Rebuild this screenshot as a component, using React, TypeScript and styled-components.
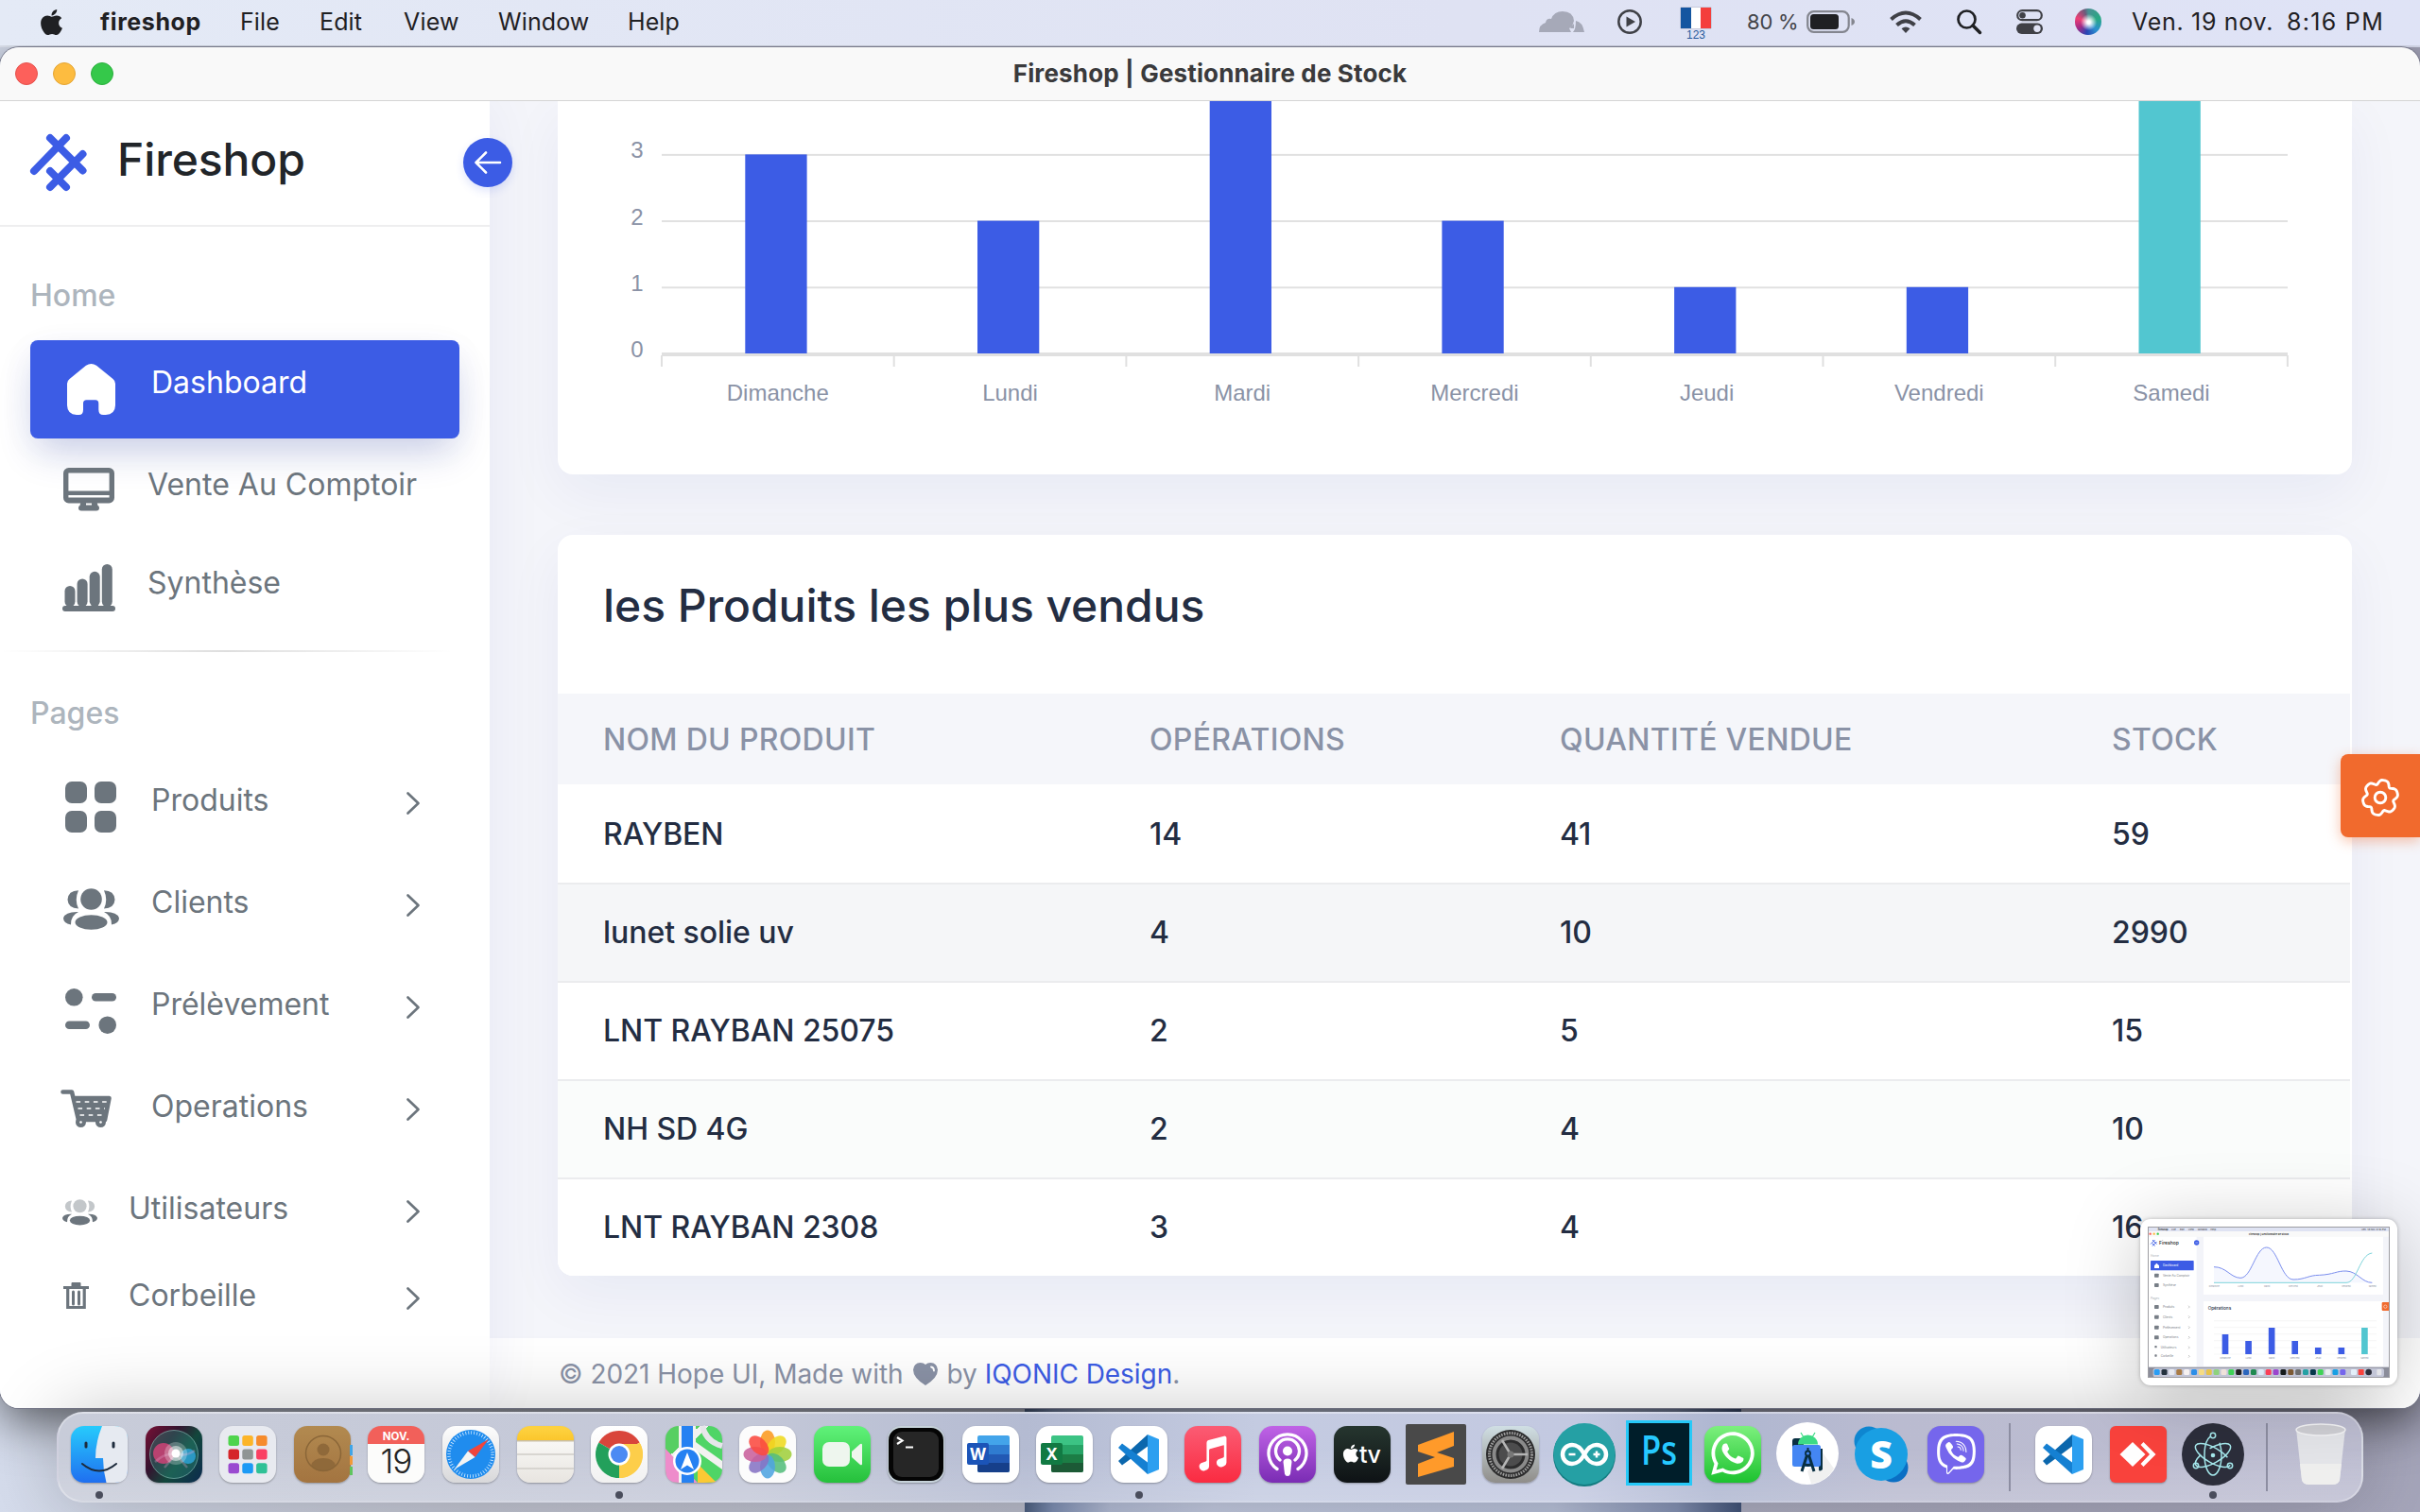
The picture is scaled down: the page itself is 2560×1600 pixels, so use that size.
import React from "react";
import styled, { createGlobalStyle } from "styled-components";
import { FaApple, FaViber, FaWhatsapp } from "react-icons/fa";
import { IoMusicalNotes } from "react-icons/io5";

const BLUE = "#3c5ce5";
const TEAL = "#52c6d0";
const GREY = "#6c757d";
const MUTED = "#8a92a6";

const GlobalStyle = createGlobalStyle`
  * { box-sizing: border-box; }
  body { margin: 0; font-family: Inter, "Liberation Sans", sans-serif; overflow: hidden; }
  svg { display: block; flex: none; overflow: visible; }
`;

/* ---------- Desktop ---------- */

const Desktop = styled.div`
  position: relative;
  width: 2560px;
  height: 1600px;
  overflow: hidden;
  display: flex;
  flex-direction: column;
  background:
    linear-gradient(90deg, #4c5f80 0, #7f90b4 30px, #b4bdd6 90px, #c3cae0 200px, #b9c2da 560px, #8592b4 690px, #43557a 756px) 1084px 1490px / 758px 110px no-repeat,
    linear-gradient(90deg, #e4eaf6 0%, #dfe2f3 60%, #dfe3f6 100%) 0 0 / 100% 50px no-repeat,
    linear-gradient(90deg, #d5dcec 0%, #c3c6d3 20%, #b9bccb 45%, #a9a9bd 80%, #a5a5ba 100%);
`;

const MenuBar = styled.header`
  position: relative;
  z-index: 1;
  height: 48px;
  flex: none;
  display: flex;
  align-items: center;
  padding: 0 38px 2px 39px;
  color: #1f2023;
  font-size: 25px;
  background: linear-gradient(90deg, #e4eaf6 0%, #dfe2f3 60%, #dfe3f6 100%);
`;

const MenuItem = styled.span<{ $w: number; $bold?: boolean; $ls?: number }>`
  width: ${(p) => p.$w}px;
  flex: none;
  white-space: pre;
  font-weight: ${(p) => (p.$bold ? 700 : 400)};
  letter-spacing: ${(p) => p.$ls ?? 0}px;
`;

const StatusArea = styled.div`
  margin-left: auto;
  display: flex;
  align-items: center;
`;

const StatusCell = styled.div<{ $w: number }>`
  width: ${(p) => p.$w}px;
  flex: none;
  display: flex;
  align-items: center;
`;

const Input = styled.div`
  display: flex;
  flex-direction: column;
  align-items: center;
  gap: 2px;
  width: 32px;
  font: 12px/11px "Liberation Sans", sans-serif;
  color: #285a9c;
  padding-top: 4px;
`;

const Flag = styled.div`
  width: 32px;
  height: 22px;
  background: linear-gradient(90deg, #1455a0 0 33%, #fff 33% 67%, #f43e3c 67%);
  box-shadow: 0 0 1px #556;
`;

const Percent = styled.span`
  font-size: 22px;
  color: #434449;
  letter-spacing: -0.2px;
`;

const SiriDot = styled.div`
  width: 28px;
  height: 28px;
  border-radius: 50%;
  background:
    radial-gradient(circle at 52% 52%, #fff 0 8%, rgba(255, 255, 255, 0) 42%),
    conic-gradient(#4a8f93, #27a982 20%, #2b8fd0 38%, #2846b4 52%, #a42a86 66%, #ee3f75 80%, #6b5b7b 95%, #4a8f93);
`;

/* ---------- Window ---------- */

const Window = styled.section`
  position: relative;
  isolation: isolate;
  margin-top: 2px;
  height: 1440px;
  flex: none;
  display: flex;
  flex-direction: column;
  border-radius: 20px;
  box-shadow: 0 0 0 1px #77798a, 0 14px 50px rgba(0, 0, 0, 0.6);
`;

const TitleBar = styled.div`
  height: 57px;
  flex: none;
  display: grid;
  grid-template-columns: 1fr auto 1fr;
  align-items: center;
  padding: 0 16px 1px;
  background: #f9f9f9;
  border-bottom: 1px solid #d4d4d4;
  border-radius: 20px 20px 0 0;
`;

const Lights = styled.div`
  display: flex;
  gap: 16px;
`;

const Light = styled.span<{ $c: string; $b: string }>`
  width: 24px;
  height: 24px;
  border-radius: 50%;
  background: ${(p) => p.$c};
  border: 1px solid ${(p) => p.$b};
`;

const Title = styled.h1`
  margin: 0;
  font-size: 26px;
  font-weight: 700;
  color: #3a3a3c;
  letter-spacing: 0.15px;
  padding-bottom: 1px;
`;

const Body = styled.div`
  flex: 1;
  min-height: 0;
  display: flex;
  border-radius: 0 0 20px 20px;
  overflow: hidden;
  background: #f4f5fa;
`;

/* ---------- Sidebar ---------- */

const Sidebar = styled.aside`
  position: relative;
  z-index: 2;
  width: 518px;
  flex: none;
  background: #fff;
  box-shadow: 0 0 60px rgba(17, 38, 146, 0.06);
`;

const Brand = styled.div`
  height: 133px;
  border-bottom: 2px solid #eeeeef;
  display: flex;
  align-items: center;
  padding: 0 0 2px 32px;
  gap: 32px;
`;

const BrandName = styled.h2`
  margin: 0;
  padding-bottom: 5px;
  font-size: 48px;
  line-height: 60px;
  font-weight: 500;
  color: #212529;
  letter-spacing: -0.1px;
`;

const Toggle = styled.button`
  position: absolute;
  left: 490px;
  top: 39px;
  width: 52px;
  height: 52px;
  border: 0;
  padding: 0;
  border-radius: 50%;
  background: ${BLUE};
  box-shadow: 0 4px 10px rgba(58, 87, 232, 0.16);
  display: grid;
  place-items: center;
`;

const GroupLabel = styled.div<{ $top: number; $bottom: number }>`
  padding: ${(p) => p.$top}px 0 ${(p) => p.$bottom}px 32px;
  font-size: 32px;
  line-height: 40px;
  font-weight: 500;
  color: #adb5bd;
`;

const NavRow = styled.a<{ $h: number; $active?: boolean }>`
  display: flex;
  align-items: center;
  height: ${(p) => p.$h}px;
  margin: 0 32px ${(p) => (p.$active ? 2 : 0)}px;
  border-radius: 8px;
  color: ${(p) => (p.$active ? "#fff" : GREY)};
  background: ${(p) => (p.$active ? BLUE : "transparent")};
  box-shadow: ${(p) => (p.$active ? "0 20px 40px -6px rgba(17, 38, 146, 0.2), 0 8px 40px rgba(17,38,146,.04)" : "none")};
`;

const IconSlot = styled.span<{ $w: number; $left: number; $lift: number }>`
  width: ${(p) => p.$w}px;
  padding-left: ${(p) => p.$left}px;
  padding-bottom: ${(p) => p.$lift * 2}px;
  flex: none;
`;

const NavLabel = styled.span<{ $lift: number }>`
  flex: 1;
  font-size: 32px;
  line-height: 40px;
  white-space: nowrap;
  padding-bottom: ${(p) => p.$lift * 2}px;
`;

const ChevronSlot = styled.span`
  padding: 0 42px 8px 0;
`;

const Separator = styled.hr`
  margin: 14px 38px 0 0;
  height: 2px;
  border: 0;
  background: linear-gradient(90deg, transparent, rgba(0, 0, 0, 0.13), transparent);
`;

/* ---------- Main ---------- */

const Main = styled.main`
  flex: 1;
  min-width: 0;
  display: flex;
  flex-direction: column;
`;

const Content = styled.div`
  flex: 1;
  padding: 0 72px;
  display: flex;
  flex-direction: column;
  gap: 64px;
`;

const Card = styled.section<{ $h: number; $cut?: boolean }>`
  height: ${(p) => p.$h}px;
  flex: none;
  background: #fff;
  border-radius: ${(p) => (p.$cut ? "0 0 16px 16px" : "16px")};
  box-shadow: 0 20px 60px rgba(17, 38, 146, 0.055);
  overflow: hidden;
`;

const CardTitle = styled.h3`
  margin: 0;
  height: 168px;
  display: flex;
  align-items: center;
  padding: 0 48px 19px;
  font-size: 48px;
  font-weight: 500;
  color: #232d42;
  letter-spacing: -0.06px;
`;

const Table = styled.table`
  width: 1896px;
  table-layout: fixed;
  border-collapse: separate;
  border-spacing: 0;
  font-size: 32px;
  font-weight: 500;
`;

const Th = styled.th<{ $w: number }>`
  width: ${(p) => p.$w}px;
  height: 96px;
  padding: 0 48px;
  text-align: left;
  font-weight: 500;
  letter-spacing: 0.3px;
  color: ${MUTED};
  background: #f5f6fa;
  white-space: nowrap;
`;

const Td = styled.td<{ $bg: string; $rule: boolean }>`
  height: 104px;
  padding: 0 48px ${(p) => (p.$rule ? 2 : 0)}px;
  color: #232d42;
  background: ${(p) => p.$bg};
  border-top: ${(p) => (p.$rule ? "2px solid #ebecee" : "0")};
  letter-spacing: -0.05px;
  white-space: nowrap;
`;

const Footer = styled.footer`
  height: 74px;
  flex: none;
  position: relative;
  background: #fff;
  padding: 2px 0 0 73px;
  display: flex;
  align-items: center;
  gap: 10px;
  font-size: 28px;
  letter-spacing: -0.04px;
  color: ${MUTED};
  white-space: nowrap;
`;

const FooterLink = styled.a`
  color: ${BLUE};
`;

const SettingsTab = styled.button`
  position: absolute;
  z-index: 3;
  right: 0;
  top: 748px;
  width: 84px;
  height: 88px;
  border: 0;
  padding: 4px 0 0;
  border-radius: 8px 0 0 8px;
  background: #f16a2d;
  box-shadow: 0 4px 14px rgba(241, 106, 45, 0.4);
  display: grid;
  place-items: center;
`;

const Preview = styled.div`
  position: absolute;
  z-index: 5;
  left: 2264px;
  top: 1290px;
  width: 272px;
  height: 176px;
  padding: 8px;
  background: #fff;
  border-radius: 11px;
  box-shadow: 0 0 4px rgba(0, 0, 0, 0.25), 0 10px 80px rgba(0, 0, 0, 0.22);
`;

/* ---------- Dock ---------- */

const Dock = styled.nav`
  margin: 4px 60px 0;
  height: 96px;
  flex: none;
  position: relative;
  display: flex;
  padding-left: 4px;
  border-radius: 28px;
  border: 2px solid rgba(255, 255, 255, 0.28);
  background:
    linear-gradient(180deg, rgba(255, 255, 255, 0) 40%, rgba(255, 255, 255, 0.16)),
    linear-gradient(90deg, #c8ccd9 0%, #c4c8d8 30%, #b4bbd2 42%, #c4cbe1 52%, #c3c9e1 66%, #afb7d1 72%, #babbd0 80%, #bdbdd1 100%);
  background-clip: border-box;
  box-shadow: 0 0 80px rgba(0, 0, 0, 0.23);
`;

const Slot = styled.div`
  width: 78.56px;
  flex: none;
  display: flex;
  flex-direction: column;
  align-items: center;
  padding-top: 13px;
`;

const Tile = styled.div<{ $bg: string; $r: number }>`
  width: 60px;
  height: 60px;
  border-radius: ${(p) => p.$r}px;
  background: ${(p) => p.$bg};
  box-shadow: ${(p) => (p.$bg === "none" ? "none" : "0 1px 2px rgba(0, 0, 0, 0.3)")};
`;

const Running = styled.span`
  width: 8px;
  height: 8px;
  margin-top: 9px;
  border-radius: 50%;
  background: #4a4d5c;
`;

const DockRule = styled.div`
  width: 36px;
  flex: none;
  display: flex;
  justify-content: center;
  padding-top: 10px;
  &::before { content: ""; width: 2px; height: 72px; background: #8d8ea2; }
`;

/* ---------- Sidebar icons ---------- */

const HomeIcon = () => (
  <svg width="51" height="54" viewBox="0 0 51 54" fill="currentColor">
    <path d="M17 48.500V42q0-3.700 3.500-3.700h9.500q3.300 0 3.300 3.700v6.500q0 5.500 5 5.500h2.500q10-.5 10.200-10V21q0-3-2.500-5L31 1.800q-5.500-3.600-11 0L2.600 16Q0 18 0 21v23q.3 9.500 10 10h2.500q4.500 0 4.500-5.500Z" />
  </svg>
);

const MonitorIcon = () => (
  <svg width="54" height="46" viewBox="0 0 54 46">
    <rect x="2.700" y="2.700" width="48.600" height="32" rx="3" fill="none" stroke="currentColor" strokeWidth="5.400" />
    <path d="M3 24.500h48v4.500H3zM3 31.500h48v4H3z" fill="currentColor" />
    <path d="M18.500 36h17l1 4q1.500 0 1.500 2.500 0 3-3 3H19q-3 0-3-3 0-2.500 1.500-2.500Z" fill="currentColor" />
    <path d="M24 37.500h6v2h-6z" fill="#fff" />
  </svg>
);

const BarsIcon = () => (
  <svg width="56" height="50" viewBox="0 0 56 50" fill="currentColor">
    <rect y="44" width="56" height="6" rx="3" />
    <rect x="2.500" y="23" width="11" height="22" rx="5.500" />
    <rect x="15.600" y="15.500" width="11" height="29.500" rx="5.500" />
    <rect x="28.700" y="7.800" width="11" height="37" rx="5.500" />
    <rect x="41.800" y="0" width="11" height="45" rx="5.500" />
  </svg>
);

const GridIcon = () => (
  <svg width="54" height="54" viewBox="0 0 54 54" fill="currentColor">
    {[0, 31].map((x) => [0, 31].map((y) => <rect key={`${x}-${y}`} x={x} y={y} width="23" height="23" rx="7" />))}
  </svg>
);

const PeopleIcon = ({ w, faded }: { w: number; faded?: boolean }) => (
  <svg width={w} height={(w * 44) / 59} viewBox="0 0 59 44" fill="currentColor">
    <g opacity={faded ? 0.4 : 1}>
      <circle cx="29.500" cy="11.500" r="11.300" />
      <path d="M16 2.200Q5 2.500 4.500 12 5 21 16 21.500q-4.500-9.500 0-19.300ZM43 2.200q11 .3 11.500 9.800Q54 21 43 21.500q4.500-9.500 0-19.300Z" />
    </g>
    <ellipse cx="29.500" cy="36" rx="17" ry="7.800" />
    <path d="M16 25q-14-.5-16 6.500 0 5.500 8 7-.5-9.500 8-13.500ZM43 25q14-.5 16 6.500 0 5.500-8 7 .5-9.500-8-13.500Z" />
  </svg>
);

const FilterIcon = () => (
  <svg width="54" height="48" viewBox="0 0 54 48" fill="currentColor">
    <circle cx="9.300" cy="9.300" r="9.300" />
    <rect x="28" y="5" width="26" height="8.500" rx="4.250" />
    <rect x="0" y="34.500" width="26" height="8.500" rx="4.250" />
    <circle cx="44.700" cy="38.700" r="9.300" />
  </svg>
);

const CartIcon = () => (
  <svg width="53" height="40" viewBox="0 0 53 40">
    <path d="M2.500 2.500h9.500l7 29.500h28l4.500-23H14" fill="none" stroke="currentColor" strokeWidth="4.600" strokeLinecap="round" strokeLinejoin="round" />
    <path d="M13.500 8h38l-4.500 25H19Z" fill="currentColor" />
    <g stroke="#fff" strokeWidth="1.700" strokeDasharray="4.600 4.600">
      <path d="M16.500 13H49M18.500 20H47M20.500 27H46" />
    </g>
    <circle cx="21.500" cy="34.500" r="5.500" fill="currentColor" />
    <circle cx="42.500" cy="34.500" r="5.500" fill="currentColor" />
    <circle cx="21.500" cy="34.500" r="1.300" fill="#fff" />
    <circle cx="42.500" cy="34.500" r="1.300" fill="#fff" />
  </svg>
);

const BinIcon = () => (
  <svg width="27" height="29" viewBox="0 0 27 29" fill="none" stroke="currentColor">
    <path d="M0 5.500h27M4.700 6v20.500h17.500V6" strokeWidth="3.200" />
    <path d="M9 0.500h9v4H9z" fill="currentColor" />
    <path d="M10.500 10v13M16.500 10v13" strokeWidth="3" strokeLinecap="round" />
  </svg>
);

const Chevron = () => (
  <svg width="14" height="24" viewBox="0 0 14 24" fill="none" stroke={GREY} strokeWidth="2.700" strokeLinecap="round" strokeLinejoin="round">
    <path d="M1.500 1.500 12.500 12 1.500 22.500" />
  </svg>
);

const Logo = () => (
  <svg width="60" height="60" viewBox="0 0 60 60" stroke={BLUE} strokeWidth="8" strokeLinecap="round">
    <path d="M4 39 38 4M21 4 55.500 38.500M21 56 55.500 21M21 39 38 56" />
  </svg>
);

const gearPath = (() => {
  const pts: string[] = [];
  for (let a = 0; a < 360; a += 4) {
    const t = (a * Math.PI) / 180;
    const r = 17 + 2.300 * Math.cos(6 * (t + 1.330)) - 0.6 * Math.cos(12 * (t + 1.330));
    pts.push(`${(21 + r * Math.cos(t)).toFixed(2)} ${(21 + r * Math.sin(t)).toFixed(2)}`);
  }
  return `M${pts.join("L")}Z`;
})();

const GearIcon = () => (
  <svg width="42" height="42" viewBox="0 0 42 42" fill="none" stroke="#fff" strokeWidth="2.900" strokeLinejoin="round">
    <path d={gearPath} />
    <circle cx="21" cy="21" r="5.800" />
  </svg>
);

/* ---------- Chart ---------- */

const days = [
  { label: "Dimanche", value: 3 },
  { label: "Lundi", value: 2 },
  { label: "Mardi", value: 5 },
  { label: "Mercredi", value: 2 },
  { label: "Jeudi", value: 1 },
  { label: "Vendredi", value: 1 },
  { label: "Samedi", value: 5, accent: true },
];

const STEP = 245.7;
const UNIT = 70.2;

const BarChart = () => (
  <svg width="1898" height="395" viewBox="0 -1 1898 395" fontFamily='"Liberation Sans", Arial, sans-serif' fontSize="24" fill={MUTED}>
    {[1, 2, 3].map((n) => (
      <rect key={n} x="110" y={265.500 - n * UNIT} width="1720" height="2" fill="#e1e1e1" />
    ))}
    {[0, 1, 2, 3].map((n) => (
      <text key={n} x="90.500" y={270 - n * UNIT} textAnchor="end">{n}</text>
    ))}
    <rect x="110" y="265" width="1720" height="4" fill="#e0e0e0" />
    {Array.from({ length: 8 }, (_, i) => (
      <rect key={i} x={109 + i * STEP} y="268" width="2" height="12" fill="#e0e0e0" />
    ))}
    {days.map((d, i) => {
      const top = Math.max(-1, 266 - d.value * UNIT);
      return (
        <g key={d.label}>
          <rect x={198.300 + i * STEP} y={top} width="65.300" height={266 - top} fill={d.accent ? TEAL : BLUE} />
          <text x={232.800 + i * STEP} y="316" textAnchor="middle">{d.label}</text>
        </g>
      );
    })}
  </svg>
);

/* ---------- Dock artwork (60 x 60 grid) ---------- */

const Code = () => (
  <g>
    <path d="M39 9 51 14V46L39 51Z" fill="#2c9ff0" />
    <path d="M8 37 12 41.500 39 21.500V9Z" fill="#0b67ad" />
    <path d="M8 23 12 18.500 39 38.500V51Z" fill="#1580d2" />
  </g>
);

const Office = ({ letter, c }: { letter: string; c: string[] }) => (
  <g>
    <rect x="16" y="10" width="34" height="39" rx="2" fill={c[0]} />
    <path d="M16 20h34v10H16z" fill={c[1]} />
    <path d="M16 30h34v10H16z" fill={c[2]} />
    <path d="M16 39h34v8q0 2-2 2H18q-2 0-2-2z" fill={c[3]} />
    <rect x="5" y="18" width="23" height="23" rx="2" fill={c[4]} />
    <text x="16.500" y="35.500" fontSize="17" fontWeight="700" fill="#fff" textAnchor="middle">{letter}</text>
  </g>
);

const petals = ["#fb9a20", "#efd920", "#a0cf3c", "#55bd7c", "#4fa4e0", "#8673c4", "#c9609c", "#fb4a40"];
const pads = ["#4fd44d", "#fcb529", "#f68b2c", "#d5252a", "#8f9594", "#fa3f63", "#9a4ad0", "#1c9af5", "#2fc196"];

type DockApp = { name: string; bg: string; r?: number; art: React.ReactNode; running?: boolean };

const apps: DockApp[] = [
  {
    name: "Finder", running: true, bg: "linear-gradient(#27cbfc, #1f6ff0)",
    art: (
      <g>
        <path d="M33 0Q26 17 26 34h8q0 13 3.500 26H46q14 0 14-14V14Q60 0 46 0Z" fill="#e6eaf1" />
        <path d="M16 18v4M45 18v4" stroke="#1d2b3c" strokeWidth="3" strokeLinecap="round" />
        <path d="M12 40q18 15 36 0" stroke="#1d2b3c" strokeWidth="2" fill="none" strokeLinecap="round" />
      </g>
    ),
  },
  {
    name: "Siri", bg: "linear-gradient(125deg, #7b1035 0%, #35132f 35%, #12473c 60%, #0c2a50 100%)",
    art: (
      <g>
        <circle cx="30" cy="30" r="25.500" fill="#2b8074" opacity=".45" />
        <circle cx="30" cy="30" r="25.500" fill="none" stroke="#8cc7bd" strokeOpacity=".6" />
        <circle cx="19" cy="29" r="11" fill="#e5427c" opacity=".75" />
        <circle cx="45" cy="32" r="8" fill="#30a8df" opacity=".8" />
        <path d="M10 38Q20 28 32 30T52 26M20 44 32 30 44 44" stroke="#e9a7d0" strokeWidth="2.500" opacity=".3" fill="none" />
        <circle cx="32" cy="29" r="12" fill="#fff" opacity=".25" />
        <circle cx="32" cy="29" r="8" fill="#fff" opacity=".5" />
        <circle cx="32" cy="29" r="4.500" fill="#fff" />
      </g>
    ),
  },
  {
    name: "Launchpad", bg: "#e8eaf0",
    art: <g>{pads.map((c, i) => <rect key={c} x={9.500 + (i % 3) * 14.800} y={10 + Math.floor(i / 3) * 14.600} width="11.500" height="11" rx="2.500" fill={c} />)}</g>,
  },
  {
    name: "Contacts", bg: "linear-gradient(#b28a50, #a37440)",
    art: (
      <g>
        <path d="M59 20h3v11h-3z" fill="#3fa5e8" /><path d="M59 32h3v9h-3z" fill="#f29a38" /><path d="M59 43h3v9h-3z" fill="#5fc55e" />
        <g fill="#8f693a"><circle cx="31" cy="25" r="6.500" /><path d="M18 42q2-8 13-8t13 8q-5 6-13 6t-13-6Z" /></g>
        <circle cx="31" cy="29" r="18.500" fill="none" stroke="#8a6638" strokeWidth="1.500" />
      </g>
    ),
  },
  {
    name: "Calendar", bg: "linear-gradient(#f2605a 0 19px, #fcfcfb 19px)",
    art: (
      <g textAnchor="middle">
        <text x="30" y="14.500" fontSize="11.500" fontWeight="700" fill="#fff">NOV.</text>
        <text x="30" y="50" fontSize="35" fontWeight="300" fill="#232323" letterSpacing="-1">19</text>
      </g>
    ),
  },
  {
    name: "Safari", bg: "linear-gradient(#fdfdfd, #d8d8da)",
    art: (
      <g>
        <circle cx="30" cy="30" r="26" fill="#1f8cee" />
        <circle cx="30" cy="30" r="23" fill="none" stroke="#d5ebff" strokeWidth="3.500" strokeDasharray=".8 2.200" />
        <path d="M49 14 34.500 33 27 26.500Z" fill="#f0453c" /><path d="M12.500 46 27 26.500 34.500 33Z" fill="#f4f4f4" />
      </g>
    ),
  },
  {
    name: "Notes", bg: "linear-gradient(#fdd13f 0 3px, #fbc62c 15px, #c9bfa6 15px 16px, #f8f7f5 17px, #e8e5e0)",
    art: <path d="M0 30h60M0 45h60" stroke="#cfcdc8" strokeWidth="1.500" />,
  },
  {
    name: "Chrome", running: true, bg: "linear-gradient(#fff, #f1f1f1)",
    art: (
      <g>
        <circle cx="30" cy="30" r="25" fill="#fff" />
        <path d="M30 30 8.350 17.500A25 25 0 0 1 51.650 17.500Z" fill="#d9453b" />
        <path d="M30 30 51.650 17.500A25 25 0 0 1 30 55Z" fill="#fdce4a" />
        <path d="M30 30 30 55A25 25 0 0 1 8.350 17.500Z" fill="#23a05b" />
        <path d="M30 19H52.400A25 25 0 0 1 30 55L39.500 35.500Z" fill="#fdce4a" />
        <circle cx="30" cy="30" r="11.500" fill="#fff" /><circle cx="30" cy="30" r="9" fill="#4c8af3" />
      </g>
    ),
  },
  {
    name: "Maps", bg: "linear-gradient(135deg, #57cf62 0 30%, #f2f2f0 30% 38%, #4fd566 38%)",
    art: (
      <g>
        <path d="M0 24 34 60H14Q0 60 0 46Z" fill="#ee8ccb" />
        <path d="M16 0h14v60H16z" fill="#2581f2" />
        <path d="M14 0h3v60h-3zM29 0h3v30h-3z" fill="#f2f2f0" />
        <path d="M32 26 60 46v-9L32 17Z" fill="#f2f2f0" /><path d="M34 40 53 59q-4 1-19 1Z" fill="#fbc934" />
        <path d="M39 0q4 17 21 21" stroke="#e6e6ea" strokeWidth="6" fill="none" />
        <circle cx="23" cy="37" r="15" fill="#fff" /><circle cx="23" cy="37" r="12.500" fill="#2581f2" />
        <path d="M23 28 30 46 23 41.500 16 46Z" fill="#fff" />
      </g>
    ),
  },
  {
    name: "Photos", bg: "#fcfcfc",
    art: <g>{petals.map((c, i) => <ellipse key={c} cx="30" cy="17" rx="8" ry="12.500" fill={c} opacity=".88" transform={`rotate(${i * 45} 30 30)`} />)}</g>,
  },
  {
    name: "FaceTime", bg: "linear-gradient(#61f27a, #25c03b)",
    art: <g fill="#eef6ee"><rect x="9" y="17" width="29" height="26" rx="7" /><path d="M40 27 49 19q2-1 2 1v20q0 2-2 1l-9-8Z" /></g>,
  },
  {
    name: "Terminal", bg: "#c7d3da",
    art: (
      <g>
        <rect x="1" y="2" width="58" height="56" rx="13" fill="#050505" /><rect x="6" y="6" width="48" height="48" rx="9" fill="#262626" />
        <path d="m10 12 5.500 3.500L10 19M19 22.500h8" stroke="#fff" strokeWidth="2.200" fill="none" />
      </g>
    ),
  },
  { name: "Word", bg: "#fff", art: <Office letter="W" c={["#43a4ea", "#2f7bd0", "#2259b4", "#163f8a", "#1b54b8"]} /> },
  { name: "Excel", bg: "#fff", art: <Office letter="X" c={["#3cc384", "#27a366", "#1c7d45", "#1c5a36", "#117a43"]} /> },
  { name: "Code", running: true, bg: "#fff", art: <Code /> },
  { name: "Music", bg: "linear-gradient(#fb5c74, #fa2b41)", art: <IoMusicalNotes x="9" y="8" size={42} color="#fff" /> },
  {
    name: "Podcasts", bg: "linear-gradient(#c063e6, #7a2cb4)",
    art: (
      <g fill="none" stroke="#fff" strokeWidth="3.300" strokeLinecap="round">
        <path d="M19 45.500a20 20 0 1 1 22 0M22 36a12.500 12.500 0 1 1 16 0" />
        <circle cx="30" cy="26.500" r="5" fill="#fff" stroke="none" />
        <path d="M25.500 38q.2-3.500 4.500-3.500t4.500 3.500l-1.500 12.500q-.5 2.500-3 2.500t-3-2.500Z" fill="#fff" stroke="none" />
      </g>
    ),
  },
  {
    name: "TV", bg: "linear-gradient(#26362f, #0e1215)",
    art: <g><FaApple x="7" y="18" size={22} color="#fff" /><text x="27" y="39" fontSize="25" fontWeight="500" fill="#fff" letterSpacing="-.5">tv</text></g>,
  },
  {
    name: "Sublime", bg: "none",
    art: (
      <g>
        <rect x="-2" y="-2" width="64" height="64" rx="2" fill="#494949" />
        <path d="M11 20 49 6v15L31 28l18 6v9L11 54V40l18-7-18-6Z" fill="#ff9a2a" />
      </g>
    ),
  },
  {
    name: "Settings", bg: "linear-gradient(#d0dfe4, #8f8d8a)",
    art: (
      <g fill="none">
        <circle cx="30" cy="30" r="26" fill="#2c2c2d" /><circle cx="30" cy="30" r="22.500" stroke="#9b9b9b" strokeWidth="3" strokeDasharray="1.600 1.200" />
        <circle cx="30" cy="30" r="17.500" stroke="#8a8a8a" strokeWidth="4" /><circle cx="30" cy="30" r="12.500" fill="#4c4c4d" />
        <path d="M30 30h18M30 30 21 15M30 30 21 45" stroke="#b5b5b5" strokeWidth="2.500" /><circle cx="30" cy="30" r="3.500" fill="#777" />
      </g>
    ),
  },
  {
    name: "Arduino", bg: "none",
    art: (
      <g>
        <circle cx="30" cy="31" r="33" fill="#127c80" /><circle cx="30" cy="29.500" r="32.500" fill="#25a0a4" />
        <g fill="none" stroke="#fff" strokeWidth="4.500">
          <path d="M30 30C25 21 21 20 17 20a10 10 0 0 0 0 20c4 0 8-1 13-10s9-10 13-10a10 10 0 0 1 0 20c-4 0-8-1-13-10Z" />
          <path d="M13.500 30h7M39.500 30h7M43 26.500v7" strokeWidth="2.500" />
        </g>
      </g>
    ),
  },
  {
    name: "Photoshop", bg: "none",
    art: (
      <g>
        <rect x="-3.500" y="-4.500" width="67" height="66" fill="#001e2a" stroke="#26c9f8" strokeWidth="3" />
        <text x="30" y="41" fontSize="43" fontWeight="600" textAnchor="middle" fill="#26c9ff" textLength="38" lengthAdjust="spacingAndGlyphs" fontFamily='"Open Sans", sans-serif'>Ps</text>
      </g>
    ),
  },
  { name: "WhatsApp", bg: "linear-gradient(#7df07e, #1cc22f)", art: <FaWhatsapp x="4" y="3" size={52} color="#fff" /> },
  {
    name: "Android Studio", bg: "none",
    art: (
      <g>
        <circle cx="30" cy="29" r="33" fill="#fff" />
        <path d="M30 48 46 28 58 45q-8 14-24 16Z" fill="#f0f0f0" />
        <rect x="14" y="13" width="12" height="12" rx="3" fill="#092f42" />
        <path d="M42 24h4v22q-4 3-4 0z" fill="#092f42" />
        <rect x="14" y="20" width="30" height="23" rx="2.500" fill="#4486f3" />
        <path d="M20 19.500a10 9.500 0 0 1 21 0Z" fill="#3ddb85" />
        <path d="m23 7 3 5M38 7l-3 5" stroke="#3ddb85" strokeWidth="1.200" />
        <path d="M29.500 31 24 48M31.500 31 37 48M25.500 40q5 3 10 0" stroke="#092f42" strokeWidth="3" fill="none" />
        <path d="M30.500 23v4" stroke="#092f42" strokeWidth="2" />
        <circle cx="30.500" cy="29" r="2.500" fill="#4486f3" stroke="#092f42" strokeWidth="1.800" />
      </g>
    ),
  },
  {
    name: "Skype", bg: "none",
    art: (
      <g>
        <circle cx="17" cy="16" r="15.500" fill="#0e86d0" /><circle cx="43" cy="44" r="15.500" fill="#0a6fc4" />
        <circle cx="30" cy="30" r="28" fill="#199fe3" />
        <text x="30" y="44.500" fontSize="41" fontWeight="800" textAnchor="middle" fill="#fff" fontFamily='"Open Sans", sans-serif'>S</text>
      </g>
    ),
  },
  { name: "Viber", bg: "#7566ec", art: <FaViber x="9" y="8" size={43} color="#fff" /> },
];

const recents: DockApp[] = [
  { name: "Code", bg: "#fff", art: <Code /> },
  { name: "AnyDesk", bg: "#f9423c", r: 6, art: <g fill="#fff"><path d="M24 17 37.500 30 24 43 10.500 30Z" /><path d="m32.500 20 3-3L48.500 30l-13 13-3-3L42 30Z" /></g> },
  {
    name: "Electron", running: true, bg: "none",
    art: (
      <g>
        <circle cx="30" cy="30" r="33" fill="#2c2e3b" />
        <g fill="none" stroke="#a5e8ec" strokeWidth="1.500">
          <ellipse cx="30" cy="31" rx="21" ry="8" transform="rotate(30 30 31)" strokeDasharray="86 12" />
          <ellipse cx="30" cy="31" rx="21" ry="8" transform="rotate(-30 30 31)" strokeDasharray="60 12" />
          <ellipse cx="30" cy="31" rx="9" ry="21" strokeDasharray="70 14" />
          <circle cx="30" cy="10" r="2.700" /><circle cx="12" cy="42" r="2.700" /><circle cx="48" cy="42" r="2.700" />
        </g>
        <circle cx="30" cy="31" r="2.300" fill="#a5e8ec" />
      </g>
    ),
  },
];

const bin: DockApp = {
  name: "Trash", bg: "none",
  art: (
    <g>
      <path d="M4 3 10 57q1 5 8 5h24q7 0 8-5L56 3Z" fill="#e4e5e9" />
      <path d="M8 40 10 57q1 5 8 5h24q7 0 8-5l2-17Z" fill="#efefee" />
      <ellipse cx="30" cy="4" rx="26" ry="6" fill="#cfcfd4" stroke="#f4f4f6" strokeWidth="1.500" />
    </g>
  ),
};

const DockIcon = ({ app }: { app: DockApp }) => (
  <Slot title={app.name}>
    <Tile $bg={app.bg} $r={app.r ?? 14}>
      <svg width="60" height="60" viewBox="0 0 60 60">{app.art}</svg>
    </Tile>
    {app.running && <Running />}
  </Slot>
);

/* ---------- Floating capture preview ---------- */

const miniNav: [string, number, number][] = [
  ["Vente Au Comptoir", 158, 1], ["Synthèse", 189, 1], ["Produits", 258, 0], ["Clients", 290, 0],
  ["Prélèvement", 323, 0], ["Operations", 355, 0], ["Utilisateurs", 387, 0], ["Corbeille", 415, 0],
];
const miniDock = ["#2a9df4", "#24323e", "#e8eaf0", "#a97b45", "#f6f1f0", "#2d8fe8", "#f6dc83", "#e7c34a", "#8fd27d", "#f0e2da", "#3fd356", "#202020", "#2b66bd", "#1f8a50", "#dcebf7", "#fa3f57", "#9b45cd", "#161b1b", "#7c5a34", "#6d6d6d", "#25a0a4", "#05384a", "#3fd356", "#e9eff0", "#199fe3", "#7566ec"];

const MiniCapture = () => (
  <svg width="256" height="160" viewBox="0 0 768 480" fontSize="9.500" fill="#777e86">
    <rect width="768" height="480" fill="#f3f4f9" />
    <rect width="768" height="15" fill="#dfe3f3" />
    <text x="14" y="11" fontSize="8" fill="#333"><tspan fontWeight="700" x="32">fireshop</tspan><tspan x="76">File</tspan><tspan x="102">Edit</tspan><tspan x="128">View</tspan><tspan x="158">Window</tspan><tspan x="199">Help</tspan></text>
    <text x="678" y="11" fontSize="8" fill="#333">Ven. 19 nov. 8:16 PM</text>
    <rect y="15" width="768" height="17" fill="#f9f9f9" />
    <circle cx="8" cy="23" r="3.600" fill="#fc5d57" /><circle cx="20" cy="23" r="3.600" fill="#fdbb40" /><circle cx="32" cy="23" r="3.600" fill="#34c84a" />
    <text x="384" y="26" fontSize="8" fontWeight="700" fill="#333" textAnchor="middle">Fireshop | Gestionnaire de Stock</text>
    <path d="M0 32h155v414H0z" fill="#fff" />
    <svg x="9" y="42" width="20" height="20" viewBox="0 0 60 60" stroke={BLUE} strokeWidth="9" strokeLinecap="round"><path d="M4 38 38 4M21 4 56 38M21 56 56 21M21 38 38 56" /></svg>
    <text x="36" y="56" fontSize="15" fontWeight="500" fill="#222">Fireshop</text>
    <circle cx="155" cy="51" r="8" fill={BLUE} /><path d="M151 51h8" stroke="#fff" strokeWidth="1.500" />
    <text x="9" y="97" fill="#a8afb6">Home</text>
    <rect x="9" y="108" width="137" height="31" rx="2" fill={BLUE} />
    <path d="M21 124l7-8 8 8v8H21z" fill="#fff" /><text x="48" y="125" fill="#fff">Dashboard</text>
    <text x="9" y="230" fill="#a8afb6">Pages</text>
    {miniNav.map(([label, y, top], i) => (
      <g key={label}>
        <text x={i > 5 ? 41 : 48} y={y}>{label}</text>
        <rect x={i > 5 ? 22 : 21} y={y - 9} width={i > 5 ? 7 : 14} height={i > 5 ? 7 : 12} rx="2" />
        {!top && <path d={`m129 ${y - 7} 4 4-4 4`} fill="none" stroke="#777" strokeWidth="1.300" />}
      </g>
    ))}
    <path d="M177 32h570v184H177zM177 237h570v206H177z" fill="#fff" />
    <path d="M210 128C250 128 262 162 294 163 330 163 342 66 377 66 412 66 424 168 462 168 500 168 510 154 545 154 590 152 600 140 630 141 665 142 680 178 712 178L712 178H210Z" fill="#3c5ce5" opacity=".05" />
    <path d="M210 128C250 128 262 162 294 163 330 163 342 66 377 66 412 66 424 168 462 168 500 168 510 154 545 154 590 152 600 140 630 141 665 142 680 178 712 178" fill="none" stroke="#7b8eee" strokeWidth="3" />
    <path d="M210 178H630C665 178 672 88 712 84" fill="none" stroke="#7ed4db" strokeWidth="3" />
    <text x="191" y="263" fontSize="14" fontWeight="500" fill="#232d42">Opérations</text>
    <path d="M210 299h516M210 320h516M210 341h516M210 362h516M210 384h516M210 405h516" stroke="#ececec" strokeWidth="1.500" />
    {[63, 42, 84, 42, 21, 21, 84].map((h, i) => (
      <rect key={i} x={236 + i * 73.700} y={405 - h} width="20" height={h} fill={i === 6 ? TEAL : BLUE} />
    ))}
    {days.map((d, i) => (
      <g key={d.label} fontSize="7" textAnchor="middle" fill="#8d93a3">
        <text x={246 + i * 73.700} y="421">{d.label}</text>
        <text x={211 + i * 83.700} y="193">{d.label}</text>
      </g>
    ))}
    <rect x="743" y="240" width="25" height="27" rx="3" fill="#f16a2d" /><circle cx="754" cy="254" r="5" fill="none" stroke="#fff" strokeWidth="1.500" />
    <rect y="446" width="768" height="34" fill="#8b8d9a" />
    <rect x="17" y="449" width="733" height="29" rx="8" fill="#c3c6d7" />
    {miniDock.map((c, i) => <rect key={i} x={20 + i * 23.600} y="453" width="18" height="18" rx="4.500" fill={c} />)}
    <rect x="645" y="453" width="18" height="18" rx="4" fill="#e3eef8" /><rect x="668" y="453" width="18" height="18" rx="2" fill="#f9423c" /><circle cx="701" cy="462" r="10" fill="#2c2e3b" /><rect x="727" y="453" width="15" height="19" rx="3" fill="#e4e5e9" />
    <rect x="1.500" y="1.500" width="765" height="477" fill="none" stroke="#9d9da2" strokeWidth="3" />
  </svg>
);

/* ---------- Data ---------- */

type NavEntry = { label: string; icon: React.ReactNode; x: number; labelX: number; h: number; lift: number; iconLift?: number; more?: boolean; active?: boolean };

const homeNav: NavEntry[] = [
  { label: "Dashboard", icon: <HomeIcon />, x: 39, labelX: 128, h: 104, lift: 6.6, active: true },
  { label: "Vente Au Comptoir", icon: <MonitorIcon />, x: 35, labelX: 124, h: 104, lift: 4.6 },
  { label: "Synthèse", icon: <BarsIcon />, x: 34, labelX: 124, h: 104, lift: 4.6 },
];

const pageNav: NavEntry[] = [
  { label: "Produits", icon: <GridIcon />, x: 37, labelX: 128, h: 108, lift: 6.6, more: true },
  { label: "Clients", icon: <PeopleIcon w={59} />, x: 35, labelX: 128, h: 108, lift: 6.6, more: true },
  { label: "Prélèvement", icon: <FilterIcon />, x: 37, labelX: 128, h: 108, lift: 6.6, more: true },
  { label: "Operations", icon: <CartIcon />, x: 32, labelX: 128, h: 108, lift: 6.6, iconLift: 5, more: true },
  { label: "Utilisateurs", icon: <PeopleIcon w={37} faded />, x: 34, labelX: 104, h: 108, lift: 6.6, iconLift: 3.5, more: true },
  { label: "Corbeille", icon: <BinIcon />, x: 35, labelX: 104, h: 76, lift: 6.6, iconLift: 7, more: true },
];

const rows = [
  ["RAYBEN", "14", "41", "59"],
  ["lunet solie uv", "4", "10", "2990"],
  ["LNT RAYBAN 25075", "2", "5", "15"],
  ["NH SD 4G", "2", "4", "10"],
  ["LNT RAYBAN 2308", "3", "4", "16"],
];
const rowTints = ["#fff", "#f5f6f8", "#fff", "#fafcfb", "#fff"];

const NavItem = ({ item }: { item: NavEntry }) => (
  <NavRow $h={item.h} $active={item.active}>
    <IconSlot $w={item.labelX} $left={item.x} $lift={item.iconLift ?? 0}>{item.icon}</IconSlot>
    <NavLabel $lift={item.lift}>{item.label}</NavLabel>
    {item.more && <ChevronSlot><Chevron /></ChevronSlot>}
  </NavRow>
);

export default function App() {
  return (
    <Desktop>
      <GlobalStyle />
      <MenuBar>
        <MenuItem $w={67}><FaApple size={31} /></MenuItem>
        <MenuItem $w={148} $bold $ls={0.6}>fireshop</MenuItem>
        <MenuItem $w={84} $ls={0.1}>File</MenuItem>
        <MenuItem $w={89} $ls={0.1}>Edit</MenuItem>
        <MenuItem $w={100} $ls={0.2}>View</MenuItem>
        <MenuItem $w={137} $ls={0.1}>Window</MenuItem>
        <MenuItem $w={70} $ls={0.1}>Help</MenuItem>
        <StatusArea>
          <StatusCell $w={83}>
            <svg width="48" height="22" viewBox="0 0 48 22" fill="#a6a9b8">
              <path d="M0 22q0-8 7-10 1-5 6-4Q16 0 25 0q11 0 12 10l-2 6-3 2 2 4ZM36 22q3-3 3-12 7 1 9 12ZM33 18l4-5v5Z" />
            </svg>
          </StatusCell>
          <StatusCell $w={67}>
            <svg width="26" height="26" viewBox="0 0 26 26"><circle cx="13" cy="13" r="11.700" fill="none" stroke="#3f4046" strokeWidth="2.500" /><path d="M9.500 7.500 19 13l-9.500 5.500Z" fill="#3f4046" /></svg>
          </StatusCell>
          <StatusCell $w={70}><Input><Flag /><span>123</span></Input></StatusCell>
          <StatusCell $w={63}><Percent>80 %</Percent></StatusCell>
          <StatusCell $w={88}>
            <svg width="51" height="24" viewBox="0 0 51 24"><rect x="1.200" y="1.200" width="43.500" height="21.600" rx="6.500" fill="none" stroke="#84868f" strokeWidth="2.200" /><rect x="4" y="4" width="30" height="16" rx="3.500" fill="#1f2023" /><path d="M47.500 8q3.500 1.500 3.500 4t-3.500 4Z" fill="#84868f" /></svg>
          </StatusCell>
          <StatusCell $w={71}>
            <svg width="34" height="24" viewBox="0 0 34 24" fill="none" stroke="#3f4046" strokeWidth="4"><path d="M1.500 9.500q15.500-14 31 0M7.500 15.500q9.500-8.500 19 0" /><path d="M17 24 12.500 19.200q4.500-3.500 9 0Z" fill="#3f4046" stroke="none" /></svg>
          </StatusCell>
          <StatusCell $w={63}>
            <svg width="26" height="26" viewBox="0 0 26 26" fill="none" stroke="#1f2023"><circle cx="10.500" cy="10.500" r="9" strokeWidth="2.700" /><path d="m17 17 7.500 7.500" strokeWidth="3.500" strokeLinecap="round" /></svg>
          </StatusCell>
          <StatusCell $w={62}>
            <svg width="28" height="26" viewBox="0 0 28 26"><rect x="1.200" y="1.200" width="25.600" height="10" rx="5" fill="none" stroke="#3f4046" strokeWidth="2.200" /><circle cx="6.500" cy="6.200" r="3.300" fill="#3f4046" /><rect y="14.500" width="28" height="11.500" rx="5.700" fill="#3f4046" /><circle cx="22" cy="20.200" r="3.700" fill="#dfe2f4" /></svg>
          </StatusCell>
          <StatusCell $w={60}><SiriDot /></StatusCell>
          <MenuItem $w={164} $ls={0.7}>Ven. 19 nov.</MenuItem>
          <MenuItem $w={103} $ls={1.3}>8:16 PM</MenuItem>
        </StatusArea>
      </MenuBar>

      <Window>
        <TitleBar>
          <Lights>
            <Light $c="#fd605b" $b="#e5524d" />
            <Light $c="#fdbc40" $b="#e4a534" />
            <Light $c="#35c84a" $b="#2bb03e" />
          </Lights>
          <Title>Fireshop | Gestionnaire de Stock</Title>
          <span />
        </TitleBar>
        <Body>
          <Sidebar>
            <Brand>
              <Logo />
              <BrandName>Fireshop</BrandName>
            </Brand>
            <Toggle aria-label="Toggle sidebar">
              <svg width="28" height="24" viewBox="0 0 28 24" fill="none" stroke="#fff" strokeWidth="2.600" strokeLinecap="round" strokeLinejoin="round"><path d="M27 12H1.500M12 1.500 1.500 12 12 22.500" /></svg>
            </Toggle>
            <GroupLabel $top={53} $bottom={27}>Home</GroupLabel>
            {homeNav.map((n) => <NavItem key={n.label} item={n} />)}
            <Separator />
            <GroupLabel $top={45} $bottom={25}>Pages</GroupLabel>
            {pageNav.map((n) => <NavItem key={n.label} item={n} />)}
          </Sidebar>
          <Main>
            <Content>
              <Card $h={395} $cut><BarChart /></Card>
              <Card $h={784}>
                <CardTitle>les Produits les plus vendus</CardTitle>
                <Table>
                  <thead>
                    <tr>
                      <Th $w={578}>NOM DU PRODUIT</Th>
                      <Th $w={434}>OPÉRATIONS</Th>
                      <Th $w={584}>QUANTITÉ VENDUE</Th>
                      <Th $w={300}>STOCK</Th>
                    </tr>
                  </thead>
                  <tbody>
                    {rows.map((r, i) => (
                      <tr key={r[0]}>{r.map((c, j) => <Td key={j} $bg={rowTints[i]} $rule={i > 0}>{c}</Td>)}</tr>
                    ))}
                  </tbody>
                </Table>
              </Card>
            </Content>
            <Footer>
              <span>© 2021 Hope UI, Made with</span>
              <svg width="26" height="24" viewBox="0 0 26 24">
                <path d="M13 24Q0 16 0 7.500 1 0 7.500 0 11 0 13 2q2-2 5.500-2Q25 0 26 7.500 26 16 13 24Z" fill={MUTED} />
                <path d="M19 4.500q3 .5 3 4" stroke="#fff" strokeWidth="1.800" fill="none" strokeLinecap="round" />
              </svg>
              <span>by <FooterLink>IQONIC Design</FooterLink>.</span>
            </Footer>
          </Main>
        </Body>
        <SettingsTab aria-label="Settings"><GearIcon /></SettingsTab>
      </Window>

      <Dock>
        {apps.map((a) => <DockIcon key={a.name} app={a} />)}
        <DockRule />
        {recents.map((a) => <DockIcon key={a.name} app={a} />)}
        <DockRule />
        <DockIcon app={bin} />
      </Dock>

      <Preview><MiniCapture /></Preview>
    </Desktop>
  );
}
